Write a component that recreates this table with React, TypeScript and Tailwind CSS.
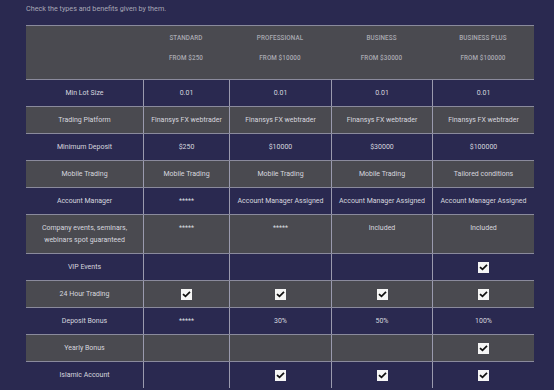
import React from "react";

type Cell = string | { check: true } | null;

const CHECK: Cell = { check: true };

const rows: { label: string[]; cells: Cell[]; tall?: boolean }[] = [
  { label: ["Min Lot Size"], cells: ["0.01", "0.01", "0.01", "0.01"] },
  {
    label: ["Trading Platform"],
    cells: ["Finansys FX webtrader", "Finansys FX webtrader", "Finansys FX webtrader", "Finansys FX webtrader"],
  },
  { label: ["Minimum Deposit"], cells: ["$250", "$10000", "$30000", "$100000"] },
  { label: ["Mobile Trading"], cells: ["Mobile Trading", "Mobile Trading", "Mobile Trading", "Tailored conditions"] },
  {
    label: ["Account Manager"],
    cells: ["*****", "Account Manager Assigned", "Account Manager Assigned", "Account Manager Assigned"],
  },
  {
    label: ["Company events, seminars,", "webinars spot guaranteed"],
    cells: ["*****", "*****", "Included", "Included"],
    tall: true,
  },
  { label: ["VIP Events"], cells: [null, null, null, CHECK] },
  { label: ["24 Hour Trading"], cells: [CHECK, CHECK, CHECK, CHECK] },
  { label: ["Deposit Bonus"], cells: ["*****", "30%", "50%", "100%"] },
  { label: ["Yearly Bonus"], cells: [null, null, null, CHECK] },
  { label: ["Islamic Account"], cells: [null, CHECK, CHECK, CHECK] },
];

const plans = [
  ["STANDARD", "FROM $250"],
  ["PROFESSIONAL", "FROM $10000"],
  ["BUSINESS", "FROM $30000"],
  ["BUSINESS PLUS", "FROM $100000"],
];

function CheckBox() {
  return (
    <svg width="11" height="11" viewBox="0 0 11 11" className="block">
      <rect x="0" y="0" width="11" height="11" fill="#f5f5f5" />
      <path d="M2.6 5.6 L4.5 7.4 L8.4 3.4" fill="none" stroke="#111" strokeWidth="1.7" strokeLinecap="square" />
    </svg>
  );
}

function renderCell(c: Cell) {
  if (c === null) return null;
  if (typeof c === "object") return <CheckBox />;
  return <span>{c}</span>;
}

export default function App() {
  return (
    <div
      className="w-[554px] h-[390px] overflow-hidden bg-[#2a2950] text-[7px] text-[#d6d6df]"
      style={{ fontFamily: "Roboto, 'Liberation Sans', sans-serif" }}
    >
      <div className="pl-[26px] pt-[4px] h-[25px] text-[#a8a8b6] text-[7.2px] leading-[10px]">
        Check the types and benefits given by them.
      </div>
      <div className="ml-[26px] w-[508px]">
        {/* header */}
        <div className="grid grid-cols-[117px_86px_102px_101px_102px] h-[54px] bg-[#4a4a50] border-t border-[#8a8a9c]">
          <div />
          {plans.map((p) => (
            <div
              key={p[0]}
              className="flex flex-col items-center pt-[8px] gap-[11px] text-[6.3px] leading-[9px] font-medium text-[#a9a9b1] tracking-[0.1px]"
            >
              <span>{p[0]}</span>
              <span>{p[1]}</span>
            </div>
          ))}
        </div>
        {rows.map((r, i) => {
          const gray = i % 2 === 1;
          return (
            <div
              key={i}
              className={`grid grid-cols-[117px_86px_102px_101px_102px] border-t border-[#8a8a9c] ${
                r.tall ? "h-[39px]" : "h-[27px]"
              } ${gray ? "bg-[#4a4a50]" : ""}`}
            >
              <div className="flex flex-col items-center justify-center text-center leading-[12px]">
                {r.label.map((l) => (
                  <span key={l}>{l}</span>
                ))}
              </div>
              {r.cells.map((c, j) => (
                <div
                  key={j}
                  className={`flex justify-center border-l border-[#9a9aae] leading-[12px] ${
                    r.tall ? "items-start pt-[7px]" : "items-center"
                  }`}
                >
                  {renderCell(c)}
                </div>
              ))}
            </div>
          );
        })}
      </div>
    </div>
  );
}
